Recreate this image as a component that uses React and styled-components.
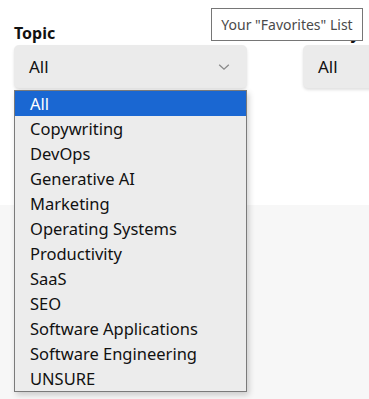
import React from 'react';
import styled, { createGlobalStyle } from 'styled-components';

const GlobalStyle = createGlobalStyle`
    html, body {
        margin: 0;
        padding: 0;
        background: #ffffff;
        font-family: 'Noto Sans', 'Open Sans', sans-serif;
        overflow: hidden;
    }
`;

const Page = styled.div`
    position: relative;
    width: 369px;
    height: 399px;
    overflow: hidden;
    display: flex;
    flex-direction: column;
`;

const FilterBar = styled.div`
    display: flex;
    gap: 56px;
    padding: 23px 0 0 14px;
    height: 205px;
    box-sizing: border-box;
    flex-shrink: 0;
`;

const Field = styled.div`
    position: relative;
    display: flex;
    flex-direction: column;
    width: ${(props) => props.width}px;
    flex-shrink: 0;
`;

const Label = styled.label`
    font-size: 16px;
    font-weight: 700;
    color: #111;
    line-height: 21px;
    height: 22px;
`;

const SelectBox = styled.div`
    height: 43px;
    background: #ebebeb;
    border-radius: 5px;
    box-shadow: 0 2px 3px rgba(0, 0, 0, 0.12);
    display: flex;
    align-items: center;
    justify-content: space-between;
    padding: 0 16px 0 15px;
    font-size: 17px;
    color: #111;
`;

const Chevron = styled.svg`
    width: 14px;
    height: 14px;
    color: #8a8a8a;
`;

const ListBox = styled.ul`
    position: absolute;
    top: 67px;
    left: 0;
    width: 233px;
    margin: 0;
    padding: 0;
    list-style: none;
    background: #ececec;
    border: 1px solid #7a7a7a;
    box-sizing: border-box;
    box-shadow: 2px 3px 6px rgba(0, 0, 0, 0.18);
    z-index: 5;
`;

const Option = styled.li`
    height: 25px;
    line-height: 25px;
    padding-left: 15px;
    font-size: 16.5px;
    color: ${(props) => (props.selected ? '#ffffff' : '#111')};
    background: ${(props) => (props.selected ? '#1a67d2' : 'transparent')};
    white-space: nowrap;
`;

const Tooltip = styled.div`
    position: absolute;
    top: 8px;
    left: 211px;
    width: 152px;
    height: 33px;
    box-sizing: border-box;
    background: #ffffff;
    border: 1px solid #767676;
    font-size: 14px;
    color: #4a4a4a;
    display: flex;
    align-items: center;
    justify-content: center;
    z-index: 10;
`;

const LowerPanel = styled.div`
    flex: 1;
    background: #f7f7f7;
`;

const topics = [
    'All',
    'Copywriting',
    'DevOps',
    'Generative AI',
    'Marketing',
    'Operating Systems',
    'Productivity',
    'SaaS',
    'SEO',
    'Software Applications',
    'Software Engineering',
    'UNSURE',
];

const App = () => {
    return (
        <Page>
            <GlobalStyle />
            <FilterBar>
                <Field width={233}>
                    <Label>Topic</Label>
                    <SelectBox>
                        <span>All</span>
                        <Chevron viewBox="0 0 16 16" fill="none">
                            <path d="M2.5 5.5 L8 10.5 L13.5 5.5" stroke="currentColor" strokeWidth="1.5" />
                        </Chevron>
                    </SelectBox>
                    <ListBox>
                        {topics.map((t, i) => (
                            <Option key={t} selected={i === 0}>{t}</Option>
                        ))}
                    </ListBox>
                </Field>
                <Field width={233}>
                    <Label>Library</Label>
                    <SelectBox>
                        <span>All</span>
                    </SelectBox>
                </Field>
            </FilterBar>
            <LowerPanel />
            <Tooltip>Your "Favorites" List</Tooltip>
        </Page>
    );
};

export default App;
